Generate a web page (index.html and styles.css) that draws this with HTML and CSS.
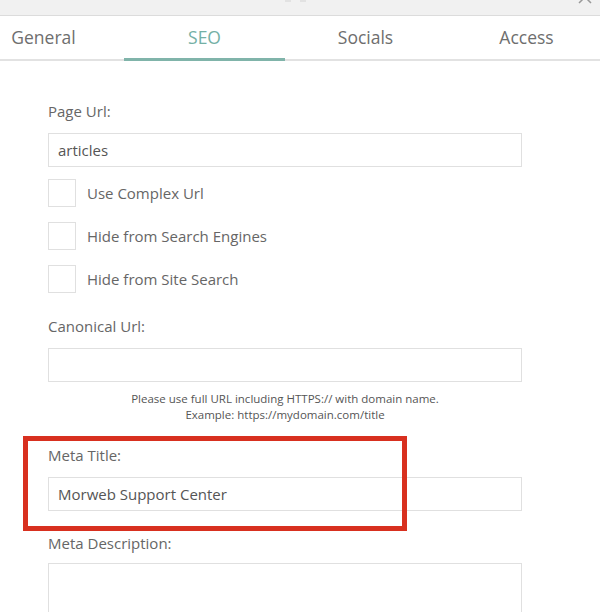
FILE: index.html
```html
<!DOCTYPE html>
<html lang="en">
<head>
<meta charset="utf-8">
<title>Page Settings</title>
<link rel="stylesheet" href="styles.css">
</head>
<body>
<div class="modal">
  <div class="modal-header">
    <span class="title-marks"></span>
    <svg class="close" width="16" height="16" viewBox="0 0 16 16"><path d="M2 2 L14 14 M14 2 L2 14" stroke="#999" stroke-width="1.5" fill="none"/></svg>
  </div>
  <div class="tabs">
    <div class="tab">General</div>
    <div class="tab active">SEO</div>
    <div class="tab">Socials</div>
    <div class="tab">Access</div>
  </div>
  <div class="content">
    <div class="field">
      <label class="label">Page Url:</label>
      <div class="input">articles</div>
    </div>
    <div class="checks">
      <div class="check"><span class="box"></span><span class="check-label">Use Complex Url</span></div>
      <div class="check"><span class="box"></span><span class="check-label">Hide from Search Engines</span></div>
      <div class="check"><span class="box"></span><span class="check-label">Hide from Site Search</span></div>
    </div>
    <div class="field canonical">
      <label class="label">Canonical Url:</label>
      <div class="input"></div>
      <p class="help">Please use full URL including HTTPS:// with domain name.<br>Example: https://mydomain.com/title</p>
    </div>
    <div class="field meta-title">
      <label class="label">Meta Title:</label>
      <div class="input">Morweb Support Center</div>
      <div class="highlight"></div>
    </div>
    <div class="field meta-desc">
      <label class="label">Meta Description:</label>
      <div class="textarea"></div>
    </div>
  </div>
</div>
</body>
</html>
```

FILE: styles.css
```css
* { box-sizing: border-box; }
html, body { margin: 0; padding: 0; background: #fff; }
body {
  width: 600px;
  height: 612px;
  overflow: hidden;
  font-family: "Open Sans", "Liberation Sans", sans-serif;
  color: #666;
}
.modal { width: 600px; }
.modal-header {
  position: relative;
  height: 16px;
  background: #f1f1f1;
  border-bottom: 1px solid #dcdcdc;
  overflow: hidden;
}
.title-marks {
  position: absolute;
  left: 282px;
  top: 0;
  width: 30px;
  height: 2px;
  background: linear-gradient(90deg, transparent 0 10%, #e2e2e2 10% 30%, transparent 30% 60%, #e2e2e2 60% 80%, transparent 80%);
}
.close {
  position: absolute;
  right: 7px;
  top: -11px;
}
.tabs {
  display: flex;
  margin-left: -37px;
  height: 45px;
  border-bottom: 2px solid #e2e2e2;
}
.tab {
  flex: 0 0 161px;
  text-align: center;
  font-size: 17.5px;
  line-height: 43px;
  color: #6e6e6e;
}
.tab.active {
  color: #74b0a5;
  border-bottom: 3px solid #80b4aa;
  margin-bottom: -2px;
}
.content {
  padding: 40px 0 0 48px;
  width: 522px;
}
.label {
  display: block;
  font-size: 15px;
  line-height: 20px;
  color: #666;
  margin-bottom: 12px;
}
.input {
  height: 34px;
  border: 1px solid #e0e0e0;
  padding: 0 9px;
  font-size: 15px;
  line-height: 32px;
  color: #555;
}
.checks {
  display: flex;
  flex-direction: column;
  gap: 15px;
  margin-top: 12px;
}
.check {
  display: flex;
  align-items: center;
  gap: 11px;
}
.box {
  width: 28px;
  height: 28px;
  border: 1px solid #e0e0e0;
}
.check-label {
  font-size: 15px;
  color: #666;
}
.canonical { margin-top: 23px; }
.help {
  margin: 9px 0 0;
  text-align: center;
  font-size: 11.5px;
  line-height: 16px;
  color: #555;
}
.meta-title {
  position: relative;
  margin-top: 22px;
}
.highlight {
  position: absolute;
  left: -25px;
  top: -9px;
  width: 384px;
  height: 95px;
  border: 5px solid #d8301f;
}
.meta-desc { margin-top: 22px; }
.meta-desc .label { margin-bottom: 10px; }
.textarea {
  height: 49px;
  border: 1px solid #e0e0e0;
  border-bottom: 0;
}
```
